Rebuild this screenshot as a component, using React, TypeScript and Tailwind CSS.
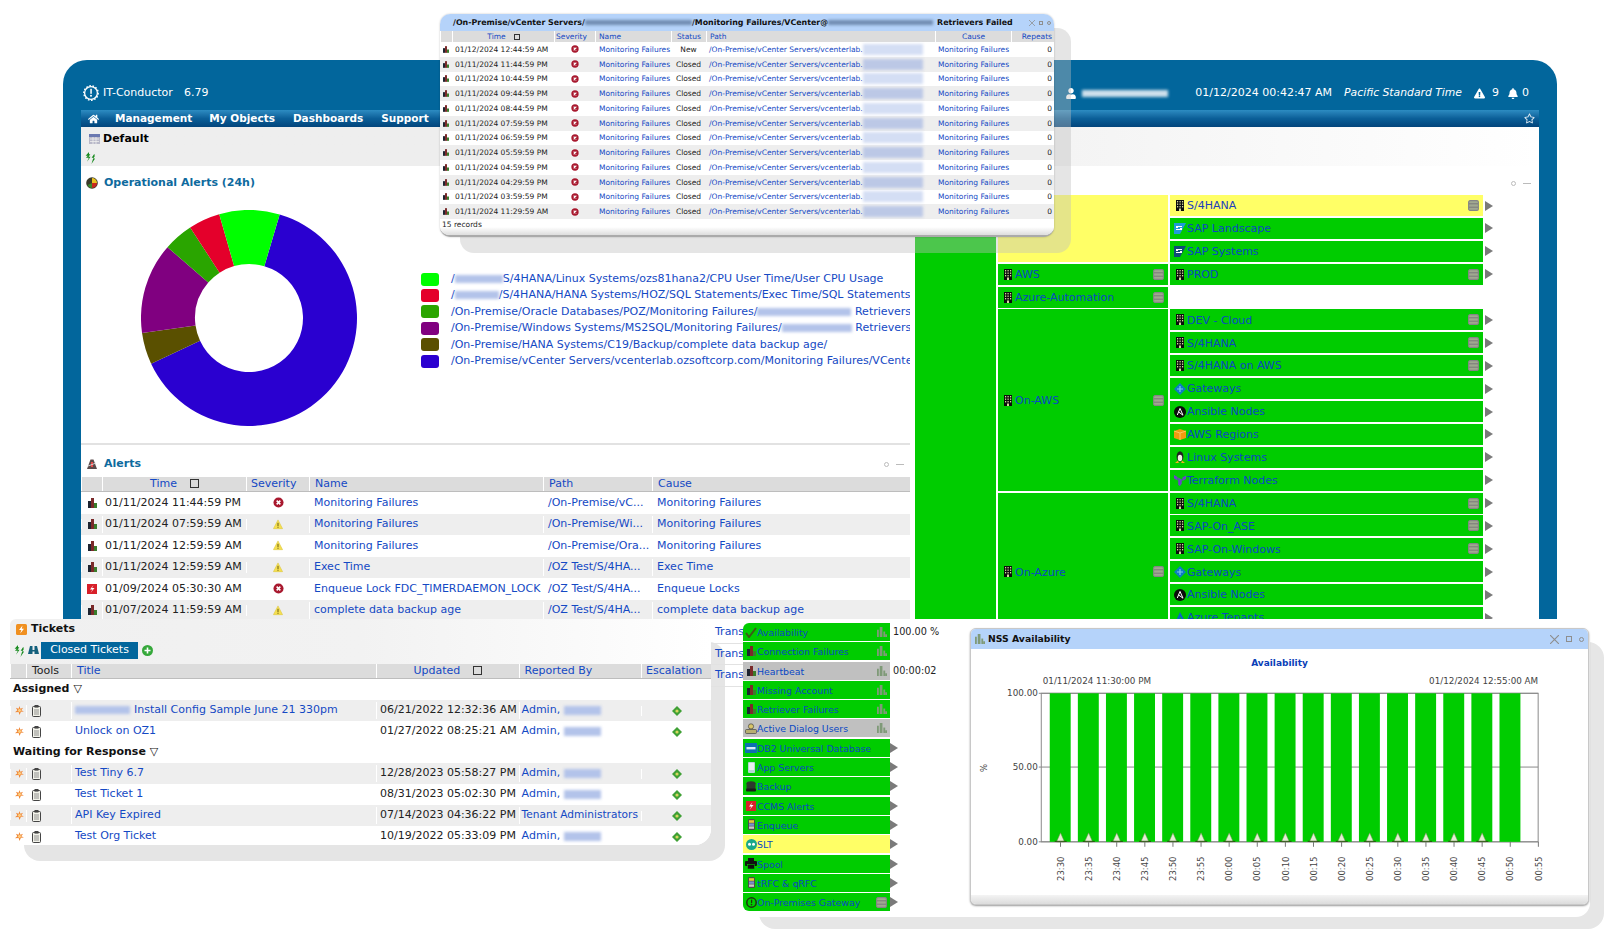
import { FaBell, FaExclamationTriangle, FaHome, FaRegStar, FaUser } from "react-icons/fa";

const LINK = "text-[#1449c4]";

const Blur = ({ className, tone = "bg-[#b3c3ea]" }: { className: string; tone?: string }) => (
  <span className={`inline-block align-middle blur-[1.5px] ${tone} ${className}`} />
);

/* ---------- small icons ---------- */
const BarIcon = ({ className = "w-[9px] h-[10px]" }: { className?: string }) => (
  <svg viewBox="0 0 9 10" className={`shrink-0 ${className}`}>
    <rect x="0" y="3" width="3" height="7" fill="#1d2430" />
    <rect x="3" y="0" width="3" height="10" fill="#7a2a2a" />
    <rect x="6" y="5" width="3" height="5" fill="#3a7d2c" />
  </svg>
);

const GrayBars = () => (
  <svg viewBox="0 0 11 11" className="w-[10px] h-[10px] shrink-0">
    <rect x="0" y="3" width="2" height="8" fill="#7f9a78" />
    <rect x="3" y="0" width="3" height="11" fill="#7f9a78" />
    <rect x="7" y="5" width="2" height="6" fill="#7f9a78" />
    <rect x="9" y="8" width="2" height="3" fill="#7f9a78" />
  </svg>
);

const ErrorIcon = ({ className = "w-[11px] h-[11px]" }: { className?: string }) => (
  <svg viewBox="0 0 12 12" className={className}>
    <circle cx="6" cy="6" r="5.5" fill="#a8182e" />
    <path d="M4 4l4 4M8 4l-4 4" stroke="#fff" strokeWidth="1.7" />
  </svg>
);

const WarnIcon = () => (
  <svg viewBox="0 0 12 12" className="w-[10px] h-[11px]">
    <path d="M6 .5L11.5 11H.5z" fill="#f5e050" stroke="#d8c030" strokeWidth=".6" />
    <rect x="5.4" y="4" width="1.2" height="4" fill="#6b5a10" />
    <rect x="5.4" y="8.8" width="1.2" height="1.2" fill="#6b5a10" />
  </svg>
);

const Building = () => (
  <svg viewBox="0 0 8 11" className="w-[8px] h-[11px] shrink-0">
    <rect width="8" height="11" fill="#0c0c0c" />
    {[1, 3.5, 6].map((x) =>
      [1, 3.5, 6].map((y) => <rect key={`${x}-${y}`} x={x} y={y} width="1.2" height="1.4" fill="#d8d8a0" />),
    )}
    <rect x="3" y="8.5" width="2" height="2.5" fill="#d8d8a0" />
  </svg>
);

const SapIcon = ({ dark }: { dark?: boolean }) => (
  <svg viewBox="0 0 12 11" className="w-[12px] h-[11px] shrink-0">
    <path d="M0 0h12L6 11H0z" fill={dark ? "#0f4a78" : "#1f9ad8"} />
    <path d="M2 3h6v1H4v1h4v2H2V6h4V5H2z" fill="#fff" />
  </svg>
);

const Gateway = () => (
  <svg viewBox="0 0 12 12" className="w-[12px] h-[12px] shrink-0">
    <path d="M6 0l6 6-6 6-6-6z" fill="#0d7cc4" />
    <path d="M6 3v6M3 6h6" stroke="#7cc8ee" strokeWidth="1.2" />
  </svg>
);

const Ansible = () => (
  <svg viewBox="0 0 12 12" className="w-[12px] h-[12px] shrink-0">
    <circle cx="6" cy="6" r="6" fill="#0b0b0b" />
    <path d="M6 2.4L9 9.2 4.4 5.8M6 2.4L3.3 9" stroke="#fff" strokeWidth="1" fill="none" />
  </svg>
);

const Cube = () => (
  <svg viewBox="0 0 12 11" className="w-[12px] h-[11px] shrink-0">
    <path d="M0 2l6-2 6 2v7l-6 2-6-2z" fill="#f39a10" />
    <path d="M0 2l6 2 6-2M6 4v7" stroke="#ffd070" strokeWidth=".8" fill="none" />
  </svg>
);

const Penguin = () => (
  <svg viewBox="0 0 12 12" className="w-[12px] h-[12px] shrink-0">
    <ellipse cx="6" cy="5.5" rx="3.4" ry="5.3" fill="#222" />
    <ellipse cx="6" cy="7" rx="2.2" ry="3.3" fill="#f4f4e8" />
    <path d="M1 12l3-2.5.8 2.5zM11 12l-3-2.5-.8 2.5z" fill="#f2b21c" />
  </svg>
);

const Terraform = () => (
  <svg viewBox="0 0 12 11" className="w-[12px] h-[11px] shrink-0">
    <path d="M0 0l3.6 2v3.6L0 3.6zM4.2 2.4l3.6 2v4L6 11l-1.8-1zM12 .4L8.4 2.4V6L12 4z" fill="#6a45c8" />
  </svg>
);

const AzureIcon = () => (
  <svg viewBox="0 0 12 11" className="w-[12px] h-[11px] shrink-0">
    <path d="M6 0L1 11h3.2L6.4 4.6 8.6 11H12z" fill="#0b62c8" />
  </svg>
);

const Check = () => (
  <svg viewBox="0 0 12 11" className="w-[12px] h-[11px] shrink-0">
    <path d="M1 6l3 4 7-9" stroke="#3c5a18" strokeWidth="2" fill="none" />
  </svg>
);

const DialogUser = () => (
  <svg viewBox="0 0 12 11" className="w-[12px] h-[11px] shrink-0">
    <circle cx="6" cy="3.4" r="2.6" fill="#d8c468" stroke="#444" strokeWidth=".7" />
    <rect x=".5" y="6.5" width="11" height="4" rx="1" fill="#b8b070" stroke="#444" strokeWidth=".7" />
  </svg>
);

const Db2 = () => (
  <svg viewBox="0 0 12 10" className="w-[12px] h-[10px] shrink-0">
    <rect width="12" height="10" fill="#0e6fb0" />
    <rect x="1.5" y="4" width="9" height="2.4" fill="#d8ecf8" />
  </svg>
);

const AppServer = () => (
  <svg viewBox="0 0 7 11" className="w-[7px] h-[11px] shrink-0 mx-[2px]">
    <rect width="7" height="11" rx="1" fill="#b8d4d8" />
    <rect x="1" y="1" width="5" height="7" fill="#e8f0f0" />
  </svg>
);

const Backup = () => (
  <svg viewBox="0 0 12 11" className="w-[12px] h-[11px] shrink-0">
    <ellipse cx="6" cy="2.2" rx="4.5" ry="2" fill="#2d3a2d" />
    <rect x="1.5" y="2.2" width="9" height="6" fill="#2d3a2d" />
    <rect x="1" y="7.5" width="10" height="3" rx="1" fill="#1a1a1a" />
  </svg>
);

const Ccms = () => (
  <svg viewBox="0 0 10 10" className="w-[10px] h-[10px] shrink-0 mx-px">
    <rect width="10" height="10" fill="#d8202a" />
    <path d="M6.5 1L3 5.5h2.5L3.5 9 7.5 4H5z" fill="#fff" />
  </svg>
);

const Enqueue = () => (
  <svg viewBox="0 0 7 11" className="w-[7px] h-[11px] shrink-0 mx-[2px]">
    <rect width="7" height="11" rx="1.5" fill="#4a4a4a" />
    <rect x="1" y="1.2" width="5" height="2.6" fill="#e6c83a" />
    <rect x="1" y="4.4" width="5" height="2.4" fill="#7a92d0" />
    <rect x="1" y="7.4" width="5" height="2.4" fill="#c8c8c8" />
  </svg>
);

const Slt = () => (
  <svg viewBox="0 0 11 11" className="w-[11px] h-[11px] shrink-0">
    <circle cx="5.5" cy="5.5" r="5.5" fill="#1aa88a" />
    <circle cx="3.5" cy="5.3" r="1.5" fill="#fff" />
    <circle cx="7.5" cy="5.3" r="1.5" fill="#fff" />
  </svg>
);

const Printer = () => (
  <svg viewBox="0 0 12 11" className="w-[12px] h-[11px] shrink-0">
    <rect x="3" y="0" width="6" height="3" fill="#111" />
    <rect x="0" y="3" width="12" height="5" rx="1" fill="#111" />
    <rect x="2.5" y="6.5" width="7" height="4.5" fill="#111" stroke="#00cc00" strokeWidth=".6" />
  </svg>
);

const GatewayDark = () => (
  <svg viewBox="0 0 11 11" className="w-[11px] h-[11px] shrink-0">
    <circle cx="5.5" cy="5.5" r="4.7" fill="none" stroke="#1f2f10" strokeWidth="1.5" />
    <rect x="5" y="2.6" width="1.2" height="3.4" fill="#1f2f10" />
    <circle cx="5.5" cy="7.6" r=".8" fill="#1f2f10" />
  </svg>
);

const BoxIcon = () => (
  <svg viewBox="0 0 11 11" className="w-[11px] h-[11px] shrink-0">
    <rect x=".6" y=".6" width="9.8" height="9.8" rx="1.5" fill="#a0a890" stroke="#858585" strokeWidth="1.1" />
    <path d="M1 3.8h9M1 7.2h9" stroke="#7a7a7a" strokeWidth="1" />
  </svg>
);

const Arrow = () => (
  <svg viewBox="0 0 8 10" className="w-[8px] h-[10px] shrink-0">
    <path d="M0 0l8 5-8 5z" fill="#7a7a7a" />
  </svg>
);

const Refresh = () => (
  <svg viewBox="0 0 11 11" className="w-[12px] h-[12px] shrink-0">
    <path d="M4.6 0L1.5 3.4h2L1.8 5.2h2.6L2.8 9 6 4.3H4.2L5.8 2H4.6zM9.5 1.6L7 5.2h1.6L6.8 11 10.2 6H8.6l1.2-2z" fill="#178a1e" />
  </svg>
);

const Binoculars = () => (
  <svg viewBox="0 0 11 11" className="w-[11px] h-[11px] shrink-0">
    <path d="M2 1h2.5v4h2V1H9l2 8H6.5V6.5h-2V9H0z" fill="#14607c" />
  </svg>
);

const Gear = () => (
  <svg viewBox="0 0 16 16" className="w-[16px] h-[16px] shrink-0">
    <circle cx="8" cy="8" r="6.4" fill="none" stroke="#fff" strokeWidth="1.3" />
    <circle cx="8" cy="8" r="7.2" fill="none" stroke="#fff" strokeWidth="1.4" strokeDasharray="1.6 1.6" />
    <rect x="7.3" y="3.8" width="1.5" height="5" fill="#fff" />
    <circle cx="8" cy="10.8" r="1" fill="#fff" />
  </svg>
);

const CalendarIcon = () => (
  <svg viewBox="0 0 11 10" className="w-[11px] h-[10px] shrink-0">
    <rect width="11" height="10" fill="#b9b9c9" />
    <rect width="11" height="3" fill="#6a78b0" />
    <path d="M1 5h9M1 7.5h9M4 3v7M7 3v7" stroke="#efefef" strokeWidth=".8" />
  </svg>
);

const PieIcon = () => (
  <svg viewBox="0 0 12 12" className="w-[12px] h-[12px] shrink-0">
    <circle cx="6" cy="6" r="5.8" fill="#3b3b2a" />
    <path d="M6 6V1a5 5 0 0 1 5 5z" fill="#e8c020" />
    <path d="M6 6h5a5 5 0 0 1-5 5z" fill="#c8281e" />
    <path d="M6 6v5a5 5 0 0 1-4.5-3z" fill="#3a8a2a" />
  </svg>
);

const AlertsIcon = () => (
  <svg viewBox="0 0 12 12" className="w-[12px] h-[12px] shrink-0">
    <path d="M1 11L4.5 1.5h3L11 11z" fill="#5a4a4a" />
    <path d="M5 4h2v5H5z" fill="#e84a4a" />
    <path d="M2 8l8-3" stroke="#ddd" strokeWidth=".9" />
  </svg>
);

const TicketIcon = () => (
  <svg viewBox="0 0 11 11" className="w-[11px] h-[11px] shrink-0">
    <rect width="11" height="11" rx="1.5" fill="#f09020" />
    <path d="M6.5 1.5L3 6h2.4L4.2 9.5 8 4.8H5.8z" fill="#fff" />
  </svg>
);

const Sun = () => (
  <svg viewBox="0 0 10 10" className="w-[9px] h-[9px] shrink-0">
    <path d="M5 0l1 3 3-1-2 2.6L10 6 6.6 6.4 5 10 4 6.6 0 7l2.6-2.4L1 2l3 1z" fill="#f08a3a" />
    <circle cx="5" cy="5" r="1.6" fill="#ffd080" />
  </svg>
);

const Clipboard = () => (
  <svg viewBox="0 0 9 12" className="w-[9px] h-[12px] shrink-0">
    <rect x=".5" y="1.5" width="8" height="10" rx="1" fill="#f2f2ea" stroke="#444" />
    <rect x="2.5" y="0" width="4" height="2.6" fill="#444" />
    <path d="M2 5h5M2 7h5M2 9h5" stroke="#777" strokeWidth=".8" />
  </svg>
);

const GreenDiamond = () => (
  <svg viewBox="0 0 10 10" className="w-[10px] h-[10px]">
    <path d="M5 0l5 5-5 5-5-5z" fill="#3fa035" />
    <circle cx="5" cy="5" r="1.6" fill="#d8d860" />
  </svg>
);

const Plus = () => (
  <svg viewBox="0 0 11 11" className="w-[11px] h-[11px] shrink-0">
    <circle cx="5.5" cy="5.5" r="5.5" fill="#35a83a" />
    <path d="M5.5 2.5v6M2.5 5.5h6" stroke="#fff" strokeWidth="1.6" />
  </svg>
);

const SortBox = () => <span className="inline-block w-[9px] h-[9px] border border-[#333] ml-[13px] align-[-1px]" />;

const Controls = ({ big }: { big?: boolean }) => (
  <div className={`flex items-center text-[#8e8e8e] ${big ? "gap-[7px]" : "gap-[4px]"}`}>
    <svg viewBox="0 0 8 8" className={big ? "w-[9px] h-[9px]" : "w-[6px] h-[6px]"}>
      <path d="M0 0l8 8M8 0l-8 8" stroke="currentColor" strokeWidth="1" />
    </svg>
    <span className={`border border-current ${big ? "w-[6px] h-[6px]" : "w-[4px] h-[4px]"}`} />
    <span className={`rounded-full border border-current ${big ? "w-[5px] h-[5px]" : "w-[4px] h-[4px]"}`} />
  </div>
);

function PanelTools() {
  return (
    <span className="flex items-center gap-[7px]">
      <span className="w-[5px] h-[5px] rounded-full border border-[#bbb]" />
      <span className="w-[8px] h-px bg-[#bbb]" />
    </span>
  );
}

/* ---------- donut ---------- */
const slices = [
  { from: 16.5, to: 245, fill: "#2a00d0" },
  { from: 245, to: 262, fill: "#5a5000" },
  { from: 262, to: 311, fill: "#800080" },
  { from: 311, to: 327, fill: "#2aa500" },
  { from: 327, to: 344, fill: "#e4002b" },
  { from: 344, to: 376.5, fill: "#00ff00" },
];

const pt = (r: number, deg: number) => {
  const a = (deg * Math.PI) / 180;
  return `${108 + r * Math.sin(a)} ${108 - r * Math.cos(a)}`;
};

const Donut = () => (
  <svg viewBox="0 0 216 216" className="w-[216px] h-[216px] shrink-0">
    {slices.map((s) => {
      const large = s.to - s.from > 180 ? 1 : 0;
      return (
        <path
          key={s.fill}
          fill={s.fill}
          d={`M${pt(108, s.from)}A108 108 0 ${large} 1 ${pt(108, s.to)}L${pt(54, s.to)}A54 54 0 ${large} 0 ${pt(54, s.from)}Z`}
        />
      );
    })}
  </svg>
);

const legend = [
  {
    color: "bg-[#00ff00]",
    text: (
      <>
        /<Blur className="w-[48px] h-[8px]" />
        S/4HANA/Linux Systems/ozs81hana2/CPU User Time/User CPU Usage
      </>
    ),
  },
  {
    color: "bg-[#e4002b]",
    text: (
      <>
        /<Blur className="w-[44px] h-[8px]" />
        /S/4HANA/HANA Systems/HOZ/SQL Statements/Exec Time/SQL Statements
      </>
    ),
  },
  {
    color: "bg-[#2aa500]",
    text: (
      <>
        /On-Premise/Oracle Databases/POZ/Monitoring Failures/
        <Blur className="w-[94px] h-[8px]" /> Retrievers Failed
      </>
    ),
  },
  {
    color: "bg-[#800080]",
    text: (
      <>
        /On-Premise/Windows Systems/MS2SQL/Monitoring Failures/
        <Blur className="w-[70px] h-[8px]" /> Retrievers Failed
      </>
    ),
  },
  { color: "bg-[#5a5000]", text: "/On-Premise/HANA Systems/C19/Backup/complete data backup age/" },
  { color: "bg-[#2a00d0]", text: "/On-Premise/vCenter Servers/vcenterlab.ozsoftcorp.com/Monitoring Failures/VCenter@vcenterlab" },
];

/* ---------- alerts table ---------- */
const alerts = [
  { time: "01/11/2024 11:44:59 PM", sev: "err", name: "Monitoring Failures", path: "/On-Premise/vC...", cause: "Monitoring Failures", icon: "bar" },
  { time: "01/11/2024 07:59:59 AM", sev: "warn", name: "Monitoring Failures", path: "/On-Premise/Wi...", cause: "Monitoring Failures", icon: "bar" },
  { time: "01/11/2024 12:59:59 AM", sev: "warn", name: "Monitoring Failures", path: "/On-Premise/Ora...", cause: "Monitoring Failures", icon: "bar" },
  { time: "01/11/2024 12:59:59 AM", sev: "warn", name: "Exec Time", path: "/OZ Test/S/4HA...", cause: "Exec Time", icon: "bar" },
  { time: "01/09/2024 05:30:30 AM", sev: "err", name: "Enqueue Lock FDC_TIMERDAEMON_LOCK", path: "/OZ Test/S/4HA...", cause: "Enqueue Locks", icon: "ccms" },
  { time: "01/07/2024 11:59:59 AM", sev: "warn", name: "complete data backup age", path: "/OZ Test/S/4HA...", cause: "complete data backup age", icon: "bar" },
];

const ALERT_COLS = "grid grid-cols-[21px_144px_63px_234px_109px_1fr]";

const AlertsTable = () => (
  <div className="text-[11px]">
    <div className={`${ALERT_COLS} h-[15px] bg-[#dcdcdc] border-b border-[#bdbdbd] leading-[14px] [&>div]:border-l [&>div]:border-white`}>
      <div />
      <div className={`text-center ${LINK}`}>
        Time
        <SortBox />
      </div>
      <div className={`text-left pl-[4px] ${LINK}`}>Severity</div>
      <div className={`pl-[5px] ${LINK}`}>Name</div>
      <div className={`pl-[5px] ${LINK}`}>Path</div>
      <div className={`pl-[5px] ${LINK}`}>Cause</div>
    </div>
    {alerts.map((a, i) => (
      <div
        key={i}
        className={`${ALERT_COLS} h-[21.5px] items-center whitespace-nowrap [&>div]:border-l [&>div]:border-white ${
          i % 2 ? "bg-[#eeeeee]" : "bg-white"
        }`}
      >
        <div className="flex justify-center">{a.icon === "bar" ? <BarIcon /> : <Ccms />}</div>
        <div className="pl-[2px] text-[#222]">{a.time}</div>
        <div className="flex justify-center">{a.sev === "err" ? <ErrorIcon /> : <WarnIcon />}</div>
        <div className={`pl-[4px] ${LINK}`}>{a.name}</div>
        <div className={`pl-[4px] ${LINK}`}>{a.path}</div>
        <div className={`pl-[4px] ${LINK}`}>{a.cause}</div>
      </div>
    ))}
  </div>
);

/* ---------- tree map ---------- */
type Row = { label: string; icon: React.ReactNode; yellow?: boolean; box?: boolean } | null;

const b = <Building />;
const groups: { label: string; yellow?: boolean; rows: Row[] }[] = [
  {
    label: "",
    yellow: true,
    rows: [
      { label: "S/4HANA", icon: b, yellow: true, box: true },
      { label: "SAP Landscape", icon: <SapIcon /> },
      { label: "SAP Systems", icon: <SapIcon dark /> },
    ],
  },
  { label: "AWS", rows: [{ label: "PROD", icon: b, box: true }] },
  { label: "Azure-Automation", rows: [null] },
  {
    label: "On-AWS",
    rows: [
      { label: "DEV - Cloud", icon: b, box: true },
      { label: "S/4HANA", icon: b, box: true },
      { label: "S/4HANA on AWS", icon: b, box: true },
      { label: "Gateways", icon: <Gateway /> },
      { label: "Ansible Nodes", icon: <Ansible /> },
      { label: "AWS Regions", icon: <Cube /> },
      { label: "Linux Systems", icon: <Penguin /> },
      { label: "Terraform Nodes", icon: <Terraform /> },
    ],
  },
  {
    label: "On-Azure",
    rows: [
      { label: "S/4HANA", icon: b, box: true },
      { label: "SAP-On_ASE", icon: b, box: true },
      { label: "SAP-On-Windows", icon: b, box: true },
      { label: "Gateways", icon: <Gateway /> },
      { label: "Ansible Nodes", icon: <Ansible /> },
      { label: "Azure Tenants", icon: <AzureIcon /> },
      null,
    ],
  },
];

const TreeRow = ({ row }: { row: Row }) => {
  if (!row) return <div className="h-[21px]" />;
  return (
    <div className="flex items-center gap-[2px] h-[21px]">
      <div
        className={`w-[313px] h-full flex items-center pl-[4px] pr-[4px] text-[11px] ${
          row.yellow ? "bg-[#ffff66] text-[#1b3fbf]" : "bg-[#00cc00] text-[#0a48c4]"
        }`}
      >
        <span className="w-[12px] flex justify-center shrink-0">{row.icon}</span>
        <span className="flex-1 ml-[1px] pt-[2px]">{row.label}</span>
        {row.box && <BoxIcon />}
      </div>
      <Arrow />
    </div>
  );
};

const TreeMap = () => (
  <div className="flex items-stretch">
    <div className="w-[81px] bg-[#00cc00] shrink-0" />
    <div className="flex flex-col ml-[2px] gap-[1.9px]">
      {groups.map((g, i) => (
        <div key={i} className="flex items-stretch gap-[2px]">
          <div
            className={`w-[170px] shrink-0 flex items-center pl-[6px] pr-[4px] text-[11px] ${
              g.yellow ? "bg-[#ffff66]" : "bg-[#00cc00]"
            } text-[#0a48c4]`}
          >
            {g.label && (
              <>
                <Building />
                <span className="flex-1 ml-[3px] pt-[2px]">{g.label}</span>
                <BoxIcon />
              </>
            )}
          </div>
          <div className="flex flex-col gap-[1.9px]">
            {g.rows.map((r, j) => (
              <TreeRow key={j} row={r} />
            ))}
          </div>
        </div>
      ))}
    </div>
  </div>
);

/* ---------- main window ---------- */
const MainPanel = () => (
  <div className="absolute left-[63px] top-[60px] w-[1494px] h-[559px] rounded-t-[24px] overflow-hidden bg-[#02669c] flex flex-col">
    <header className="h-[50px] pt-[16px] pl-[20px] pr-[28px] flex items-center text-white text-[11px] shrink-0">
      <Gear />
      <span className="ml-[4px] w-[81px]">IT-Conductor</span>
      <span>6.79</span>
      <FaUser className="ml-auto w-[10px] h-[11px]" />
      <Blur className="ml-[6px] w-[86px] h-[7px]" tone="bg-[#cfe0ec]" />
      <span className="ml-[27px]">01/12/2024 00:42:47 AM</span>
      <span className="ml-[12px] italic text-[10.8px]">Pacific Standard Time</span>
      <FaExclamationTriangle className="ml-[12px] w-[11px] h-[11px]" />
      <span className="ml-[7px]">9</span>
      <FaBell className="ml-[9px] w-[10px] h-[11px]" />
      <span className="ml-[4px]">0</span>
    </header>
    <div className="mx-[18px] flex-1 min-h-0 bg-white flex flex-col">
      <nav className="h-[17px] shrink-0 flex items-center bg-gradient-to-b from-[#2d8cc2] via-[#0b5f98] to-[#03457c] text-white text-[10.5px] font-bold pr-[4px]">
        <FaHome className="ml-[7px] w-[11px] h-[10px]" />
        <span className="ml-[16px]">Management</span>
        <span className="ml-[17px]">My Objects</span>
        <span className="ml-[18px]">Dashboards</span>
        <span className="ml-[18px]">Support</span>
        <FaRegStar className="ml-auto w-[11px] h-[11px] text-[#dfeaf2]" />
      </nav>
      <div className="h-[39px] shrink-0 bg-gradient-to-r from-[#eeeeee] via-[#eeeeee] to-white pl-[8px] pt-[4px]">
        <div className="flex items-center gap-[3px] text-[11px] font-bold text-black">
          <CalendarIcon />
          Default
        </div>
        <div className="mt-[4px] -ml-[5px]">
          <Refresh />
        </div>
      </div>
      <div className="flex flex-1 min-h-0">
        <div className="w-[829px] shrink-0 overflow-hidden flex flex-col">
          <div className="h-[34px] shrink-0 pl-[5px] flex items-center gap-[6px] text-[11px] font-bold text-[#0e6a9e]">
            <PieIcon />
            Operational Alerts (24h)
          </div>
          <div className="h-[245px] shrink-0 border-b-2 border-[#e2e2e2] flex items-start">
            <div className="ml-[60px] mt-[10px]">
              <Donut />
            </div>
            <div className="ml-[64px] mt-[71px] min-w-0 flex-1 overflow-hidden">
              {legend.map((l, i) => (
                <div key={i} className="h-[16.4px] flex items-center whitespace-nowrap">
                  <span className={`w-[18px] h-[13px] rounded-[3px] shrink-0 ${l.color}`} />
                  <span className={`ml-[12px] text-[11px] ${LINK}`}>{l.text}</span>
                </div>
              ))}
            </div>
          </div>
          <div className="h-[32px] shrink-0 flex items-center pl-[5px] pr-[6px] pt-[6px] gap-[6px] text-[11px] font-bold text-[#0e6a9e]">
            <AlertsIcon />
            Alerts
            <span className="ml-auto">
              <PanelTools />
            </span>
          </div>
          <AlertsTable />
        </div>
        <div className="flex-1 min-w-0 ml-[5px] flex flex-col">
          <div className="h-[29px] shrink-0 flex items-center justify-end pr-[8px] pt-[5px]">
            <PanelTools />
          </div>
          <TreeMap />
        </div>
      </div>
    </div>
  </div>
);

/* ---------- retrievers failed window ---------- */
const floatRows = [
  ["01/12/2024 12:44:59 AM", "New"],
  ["01/11/2024 11:44:59 PM", "Closed"],
  ["01/11/2024 10:44:59 PM", "Closed"],
  ["01/11/2024 09:44:59 PM", "Closed"],
  ["01/11/2024 08:44:59 PM", "Closed"],
  ["01/11/2024 07:59:59 PM", "Closed"],
  ["01/11/2024 06:59:59 PM", "Closed"],
  ["01/11/2024 05:59:59 PM", "Closed"],
  ["01/11/2024 04:59:59 PM", "Closed"],
  ["01/11/2024 04:29:59 PM", "Closed"],
  ["01/11/2024 03:59:59 PM", "Closed"],
  ["01/11/2024 11:29:59 AM", "Closed"],
];

const FLOAT_COLS = "grid grid-cols-[12px_102px_41px_76px_35px_229px_76px_43px]";

const RetrieversWindow = () => (
  <>
    <div className="absolute left-[460px] top-[28px] w-[611px] h-[225px] rounded-[14px] bg-[#bebebe]/40" />
    <div className="absolute left-[440px] top-[14px] w-[614px] h-[223px] rounded-[10px] bg-white overflow-hidden flex flex-col text-[7.5px] border-b-2 border-[#aaaaaa] shadow-[0_0_2px_rgba(0,0,0,0.25)]">
      <div className="h-[17px] shrink-0 bg-[#b5d3fa] flex items-center pl-[13px] pr-[3px] font-bold text-[#111] text-[7.9px] whitespace-nowrap">
        /On-Premise/vCenter Servers/
        <Blur className="w-[107px] h-[5px]" tone="bg-[#6f8bb0]" />
        /Monitoring Failures/VCenter@
        <Blur className="w-[105px] h-[5px]" tone="bg-[#6f8bb0]" />
        <span className="ml-[4px]">Retrievers Failed</span>
        <span className="ml-auto">
          <Controls />
        </span>
      </div>
      <div className={`${FLOAT_COLS} h-[11px] shrink-0 leading-[11px] bg-[#dcdcdc] ${LINK} [&>div]:border-l [&>div]:border-white`}>
        <div />
        <div className="text-center">
          Time<span className="inline-block w-[6px] h-[6px] border border-[#333] ml-[8px] align-[-0.5px]" />
        </div>
        <div className="pl-[1px]">Severity</div>
        <div className="pl-[3px]">Name</div>
        <div className="text-center">Status</div>
        <div className="pl-[3px]">Path</div>
        <div className="text-center">Cause</div>
        <div className="pr-[2px] text-right">Repeats</div>
      </div>
      {floatRows.map(([time, status], i) => (
        <div
          key={time}
          className={`${FLOAT_COLS} h-[14.75px] shrink-0 items-center whitespace-nowrap ${i % 2 ? "bg-[#eeeeee]" : "bg-white"}`}
        >
          <div className="flex justify-center">
            <BarIcon className="w-[6px] h-[7px]" />
          </div>
          <div className="pl-[3px] text-[#222]">{time}</div>
          <div className="flex justify-center">
            <ErrorIcon className="w-[8px] h-[8px]" />
          </div>
          <div className={`pl-[4px] ${LINK}`}>Monitoring Failures</div>
          <div className="text-center text-[#222]">{status}</div>
          <div className={`pl-[3px] flex items-center ${LINK}`}>
            /On-Premise/vCenter Servers/vcenterlab.
            <Blur className="w-[60px] h-[11px]" tone={i % 2 ? "bg-[#bcc8e6]" : "bg-[#d4def4]"} />
          </div>
          <div className={`pl-[3px] ${LINK}`}>Monitoring Failures</div>
          <div className="text-right pr-[2px] text-[#222]">0</div>
        </div>
      ))}
      <div className="pl-[2px] text-[#222] flex-1 bg-gradient-to-b from-white via-white to-[#dddddd]">15 records</div>
    </div>
  </>
);

/* ---------- tickets ---------- */
const TICKET_COLS = "grid grid-cols-[16px_45px_305px_142.6px_122.4px_1fr]";

type Ticket = { title: React.ReactNode; updated: string; by: React.ReactNode };

const admin = (w: string) => (
  <>
    Admin, <Blur className={`${w} h-[9px]`} />
  </>
);

const assigned: Ticket[] = [
  {
    title: (
      <>
        <Blur className="w-[55px] h-[8px] mr-[4px]" />
        Install Config Sample June 21 330pm
      </>
    ),
    updated: "06/21/2022 12:32:36 AM",
    by: admin("w-[37px]"),
  },
  { title: "Unlock on OZ1", updated: "01/27/2022 08:25:21 AM", by: admin("w-[37px]") },
];

const waiting: Ticket[] = [
  { title: "Test Tiny 6.7", updated: "12/28/2023 05:58:27 PM", by: admin("w-[37px]") },
  { title: "Test Ticket 1", updated: "08/31/2023 05:02:30 PM", by: admin("w-[37px]") },
  { title: "API Key Expired", updated: "07/14/2023 04:36:22 PM", by: <span className="text-[10.6px]">Tenant Administrators</span> },
  { title: "Test Org Ticket", updated: "10/19/2022 05:33:09 PM", by: admin("w-[37px]") },
];

const TicketRow = ({ t, shaded }: { t: Ticket; shaded: boolean }) => (
  <div className={`${TICKET_COLS} h-[21px] items-center whitespace-nowrap [&>div]:border-l [&>div]:border-white ${shaded ? "bg-[#eeeeee]" : "bg-white"}`}>
    <div className="flex justify-center pl-[2px]">
      <Sun />
    </div>
    <div className="pl-[5px]">
      <Clipboard />
    </div>
    <div className={`pl-[3px] ${LINK}`}>{t.title}</div>
    <div className="pl-[3px] text-[#222]">{t.updated}</div>
    <div className={`pl-[2px] ${LINK}`}>{t.by}</div>
    <div className="flex justify-center pl-[1px]">
      <GreenDiamond />
    </div>
  </div>
);

const TicketsWindow = () => (
  <>
    <div className="absolute left-[24px] top-[642px] w-[701px] h-[219px] rounded-[16px] bg-[#bebebe]/40" />
    <div className="absolute left-[10px] top-[619px] w-[701px] h-[226px] rounded-b-[16px] rounded-t-[6px] bg-white overflow-hidden text-[11px]">
      <div className="h-[45px] bg-gradient-to-r from-[#f0f0f0] via-[#f2f2f2] to-white">
        <div className="h-[20px] pl-[6px] flex items-center gap-[4px] font-bold text-[#111]">
          <TicketIcon />
          Tickets
        </div>
        <div className="h-[21px] pl-[3px] pt-[2px] flex items-center">
          <Refresh />
          <span className="ml-[3px]">
            <Binoculars />
          </span>
          <span className="ml-[2px] w-[97px] h-[17px] flex items-center justify-center bg-[#02669c] text-white">Closed Tickets</span>
          <span className="ml-[4px]">
            <Plus />
          </span>
        </div>
      </div>
      <div className={`${TICKET_COLS} h-[15px] leading-[14px] bg-[#dcdcdc] border-b border-[#bdbdbd] [&>div]:border-l [&>div]:border-white`}>
        <div />
        <div className="pl-[5px] text-[#222]">Tools</div>
        <div className={`pl-[5px] ${LINK}`}>Title</div>
        <div className={`text-center ${LINK}`}>
          Updated
          <SortBox />
        </div>
        <div className={`pl-[5px] ${LINK}`}>Reported By</div>
        <div className={`pl-[4px] ${LINK}`}>Escalation</div>
      </div>
      <div className="h-[21px] pl-[3px] flex items-center font-bold text-[#111]">
        Assigned<span className="ml-[4px] font-normal">▽</span>
      </div>
      {assigned.map((t, i) => (
        <TicketRow key={i} t={t} shaded={i === 0} />
      ))}
      <div className="h-[21px] pl-[3px] flex items-center font-bold text-[#111]">
        Waiting for Response<span className="ml-[4px] font-normal">▽</span>
      </div>
      {waiting.map((t, i) => (
        <TicketRow key={i} t={t} shaded={i % 2 === 0} />
      ))}
    </div>
  </>
);

/* ---------- menu + NSS chart card ---------- */
const menu: { label: string; icon: React.ReactNode; tone?: "gray" | "yellow"; bars?: boolean; arrow?: boolean; box?: boolean; value?: string }[] = [
  { label: "Availability", icon: <Check />, bars: true, value: "100.00 %" },
  { label: "Connection Failures", icon: <BarIcon />, bars: true },
  { label: "Heartbeat", icon: <BarIcon />, tone: "gray", bars: true, value: "00:00:02" },
  { label: "Missing Account", icon: <BarIcon />, bars: true },
  { label: "Retriever Failures", icon: <BarIcon />, bars: true },
  { label: "Active Dialog Users", icon: <DialogUser />, tone: "gray", bars: true },
  { label: "DB2 Universal Database", icon: <Db2 />, arrow: true },
  { label: "App Servers", icon: <AppServer />, arrow: true },
  { label: "Backup", icon: <Backup />, arrow: true },
  { label: "CCMS Alerts", icon: <Ccms />, arrow: true },
  { label: "Enqueue", icon: <Enqueue />, arrow: true },
  { label: "SLT", icon: <Slt />, tone: "yellow", arrow: true },
  { label: "Spool", icon: <Printer />, arrow: true },
  { label: "tRFC & qRFC", icon: <Enqueue />, arrow: true },
  { label: "On-Premises Gateway", icon: <GatewayDark />, arrow: true, box: true },
];

const Menu = () => (
  <div className="w-[227px] shrink-0 flex flex-col gap-[1.3px] text-[9.4px]">
    {menu.map((m, i) => (
      <div key={m.label} className="flex items-center h-[18px]">
        <div
          className={`w-[147px] h-full shrink-0 flex items-center pl-[2px] pr-[3px] ${
            m.tone === "gray" ? "bg-[#c0c0c0]" : m.tone === "yellow" ? "bg-[#ffff66]" : "bg-[#00cc00]"
          } text-[#0a48c4] ${i === 0 ? "rounded-tl-[6px]" : ""} ${i === menu.length - 1 ? "rounded-bl-[6px]" : ""}`}
        >
          <span className="w-[12px] flex justify-center shrink-0">{m.icon}</span>
          <span className="flex-1 pt-[2px] whitespace-nowrap">{m.label}</span>
          {m.bars && <GrayBars />}
          {m.box && <BoxIcon />}
        </div>
        {m.arrow && <Arrow />}
        {m.value && <span className="ml-[3px] pt-[1px] text-[9.7px] text-[#222] whitespace-nowrap">{m.value}</span>}
      </div>
    ))}
  </div>
);

const times = ["23:30", "23:35", "23:40", "23:45", "23:50", "23:55", "00:00", "00:05", "00:10", "00:15", "00:20", "00:25", "00:30", "00:35", "00:40", "00:45", "00:50", "00:55"];

const Chart = () => (
  <svg viewBox="0 0 619 217" className="w-[617px] h-[217px] block overflow-visible" fontFamily="DejaVu Sans, sans-serif">
    <text x="72" y="6" fontSize="8.8" fill="#444">
      01/11/2024 11:30:00 PM
    </text>
    <text x="569" y="6" fontSize="8.8" fill="#444" textAnchor="end">
      01/12/2024 12:55:00 AM
    </text>
    <text x="0" y="0" fontSize="8.5" fill="#444" transform="translate(16 90) rotate(-90)" textAnchor="middle">
      %
    </text>
    {[
      ["100.00", 15],
      ["50.00", 89],
      ["0.00", 164],
    ].map(([t, y]) => (
      <g key={t}>
        <text x="67" y={Number(y) + 3} fontSize="8.8" fill="#444" textAnchor="end">
          {t}
        </text>
        <line x1="68" x2="569" y1={y} y2={y} stroke="#8a8a8a" />
      </g>
    ))}
    <rect x="70.5" y="15" width="498.5" height="149" fill="none" stroke="#8a8a8a" />
    {times.slice(0, 17).map((t, i) => (
      <g key={t}>
        <rect x={79 + 28.2 * i} y="15" width="21" height="149" fill="#00cc00" />
        {i < 16 && (
          <g>
            <path d={`M${89.8 + 28.2 * i} 155l4 9h-8z`} fill="#e4efd4" stroke="#6a8a4a" strokeWidth=".5" />
            <path d={`M${84 + 28.2 * i} 163.5h12`} stroke="#2c4a10" strokeWidth="1" />
          </g>
        )}
      </g>
    ))}
    {times.map((t, i) => (
      <g key={t}>
        <line x1={89.8 + 28.2 * i} x2={89.8 + 28.2 * i} y1="164" y2="169" stroke="#777" />
        <text x="0" y="0" fontSize="8.5" fill="#444" textAnchor="middle" transform={`translate(${93 + 28.2 * i} 191) rotate(-90)`}>
          {t}
        </text>
      </g>
    ))}
  </svg>
);

const NssWindow = () => (
  <div className="w-[619px] h-[277px] mt-[5px] rounded-[6px] bg-white border border-[#c8c8c8] shadow-[0_1px_2px_rgba(0,0,0,0.4)] overflow-hidden flex flex-col">
    <div className="h-[20px] shrink-0 bg-[#b5d3fa] flex items-center px-[4px] gap-[3px] text-[9.3px] font-bold text-[#111]">
      <GrayBars />
      NSS Availability
      <span className="ml-auto">
        <Controls big />
      </span>
    </div>
    <div className="h-[29px] shrink-0 flex items-center justify-center text-[9px] font-bold text-[#0b3fb8]">Availability</div>
    <Chart />
    <div className="flex-1 bg-gradient-to-b from-[#f4f4f4] to-[#dcdcdc]" />
  </div>
);

const ChartCard = () => (
  <>
    <div className="absolute left-[759px] top-[642px] w-[845px] h-[287px] rounded-[16px] bg-[#e6e6e6]" />
    <div className="absolute left-[743px] top-[623px] w-[847px] h-[294px] rounded-[14px] bg-white flex items-start">
      <Menu />
      <NssWindow />
    </div>
  </>
);

const TransCells = () => (
  <div className="absolute left-[711px] top-[622px] w-[32px] overflow-hidden text-[11px] flex flex-col">
    {[0, 1, 2].map((i) => (
      <div key={i} className={`h-[21.5px] flex items-center pl-[4px] border-b border-[#e2e2e2] ${LINK}`}>
        Trans
      </div>
    ))}
  </div>
);

export default function App() {
  return (
    <div className="relative w-[1619px] h-[944px] overflow-hidden bg-white font-['DejaVu_Sans',Verdana,sans-serif]">
      <MainPanel />
      <RetrieversWindow />
      <TicketsWindow />
      <TransCells />
      <ChartCard />
    </div>
  );
}
